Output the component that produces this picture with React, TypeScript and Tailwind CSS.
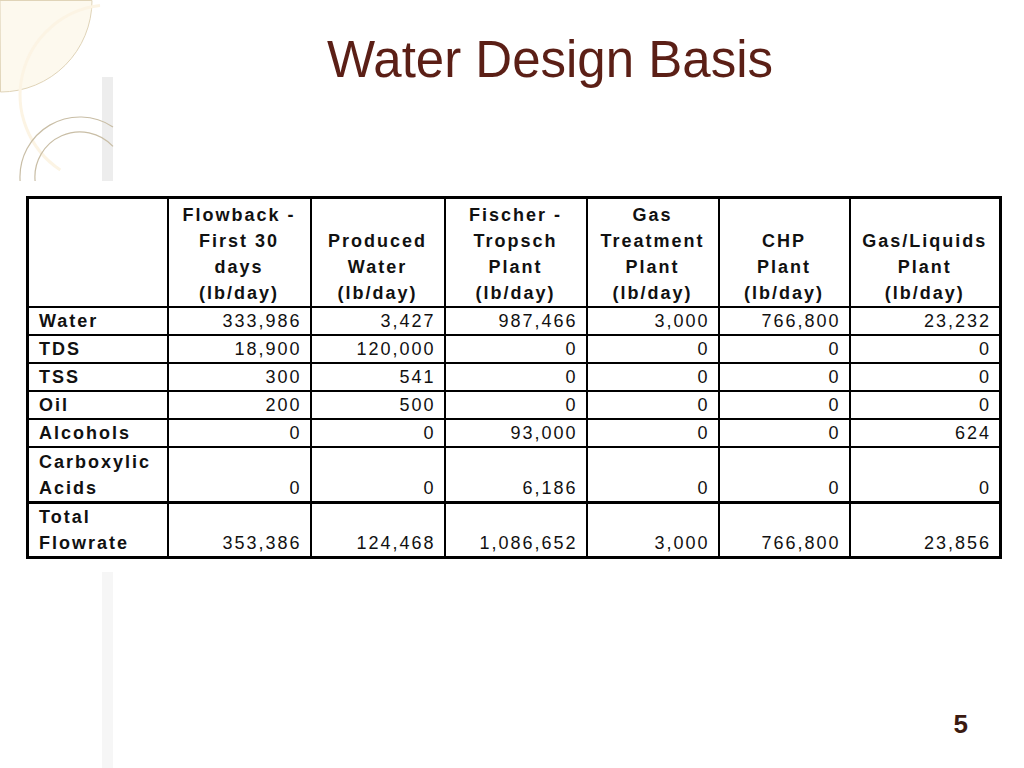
import React from "react";

const headers: string[][] = [
  [],
  ["Flowback -", "First 30", "days", "(lb/day)"],
  ["Produced", "Water", "(lb/day)"],
  ["Fischer -", "Tropsch", "Plant", "(lb/day)"],
  ["Gas", "Treatment", "Plant", "(lb/day)"],
  ["CHP", "Plant", "(lb/day)"],
  ["Gas/Liquids", "Plant", "(lb/day)"],
];

const colWidths = [140, 143, 134, 142, 132, 131, 151];

type Row = { label: string[]; values: string[]; h: string; thick?: boolean };

const rows: Row[] = [
  { label: ["Water"], values: ["333,986", "3,427", "987,466", "3,000", "766,800", "23,232"], h: "h-[28px]" },
  { label: ["TDS"], values: ["18,900", "120,000", "0", "0", "0", "0"], h: "h-[28px]" },
  { label: ["TSS"], values: ["300", "541", "0", "0", "0", "0"], h: "h-[28px]" },
  { label: ["Oil"], values: ["200", "500", "0", "0", "0", "0"], h: "h-[28px]" },
  { label: ["Alcohols"], values: ["0", "0", "93,000", "0", "0", "624"], h: "h-[28px]" },
  { label: ["Carboxylic", "Acids"], values: ["0", "0", "6,186", "0", "0", "0"], h: "h-[56px]" },
  { label: ["Total", "Flowrate"], values: ["353,386", "124,468", "1,086,652", "3,000", "766,800", "23,856"], h: "h-[53px]", thick: true },
];

function Decoration() {
  return (
    <svg
      className="absolute left-0 top-0"
      width="130"
      height="181"
      viewBox="0 0 130 181"
      fill="none"
    >
      <path d="M0 0.5 H92 A91.5 91.5 0 0 1 0.5 92 Z" fill="#fdf9ee" stroke="#e0d4b8" strokeWidth="1" />
      <path d="M100 5.6 A90 90 0 0 0 60.3 170" stroke="#fcf4e4" strokeWidth="3" />
      <rect x="102" y="77" width="11" height="104" fill="#ededed" />
      <path d="M20.1 181 A60 60 0 0 1 113 126.9" stroke="#c9bea6" strokeWidth="1.2" />
      <path d="M35.1 181 A45 45 0 0 1 113 146.4" stroke="#c9bea6" strokeWidth="1.2" />
    </svg>
  );
}

export default function App() {
  return (
    <div
      className="relative w-[1024px] h-[768px] bg-white overflow-hidden flex flex-col"
      style={{ fontFamily: '"Liberation Sans", Arial, sans-serif' }}
    >
      <Decoration />
      <div className="absolute left-[102px] top-[572px] w-[11px] h-[196px] bg-[#f6f6f6]" />

      <div className="relative pt-[34px] pl-[76px] flex justify-center">
        <h1 className="text-[51px] leading-none text-[#5b1f16] font-normal">Water Design Basis</h1>
      </div>

      <div className="relative mt-[111px] ml-[26px]">
        <table className="table-fixed border-collapse border-[3px] border-black w-[973px] text-[18px] leading-[26px] tracking-[2px] text-[#111]">
          <colgroup>
            {colWidths.map((w, i) => (
              <col key={i} style={{ width: w }} />
            ))}
          </colgroup>
          <thead>
            <tr className="h-[109px]">
              {headers.map((lines, i) => (
                <th
                  key={i}
                  className="border-2 border-black align-bottom text-center font-bold px-0 pb-0"
                >
                  {lines.map((l, j) => (
                    <div key={j} className="whitespace-nowrap">
                      {l}
                    </div>
                  ))}
                </th>
              ))}
            </tr>
          </thead>
          <tbody>
            {rows.map((r, i) => (
              <tr key={i} className={r.h}>
                <td
                  className={`border-2 border-black align-bottom text-left font-bold pl-[10px] pr-0 pb-0 ${
                    r.thick ? "border-t-[3px]" : ""
                  }`}
                >
                  {r.label.map((l, j) => (
                    <div key={j} className="whitespace-nowrap">
                      {l}
                    </div>
                  ))}
                </td>
                {r.values.map((v, j) => (
                  <td
                    key={j}
                    className={`border-2 border-black align-bottom text-right font-normal pr-[8px] pb-0 whitespace-nowrap ${
                      r.thick ? "border-t-[3px]" : ""
                    }`}
                  >
                    {v}
                  </td>
                ))}
              </tr>
            ))}
          </tbody>
        </table>
      </div>

      <div className="relative mt-auto mb-[31px] pr-[56px] flex justify-end">
        <span className="text-[26px] leading-none font-bold text-[#3b1a10]">5</span>
      </div>
    </div>
  );
}
